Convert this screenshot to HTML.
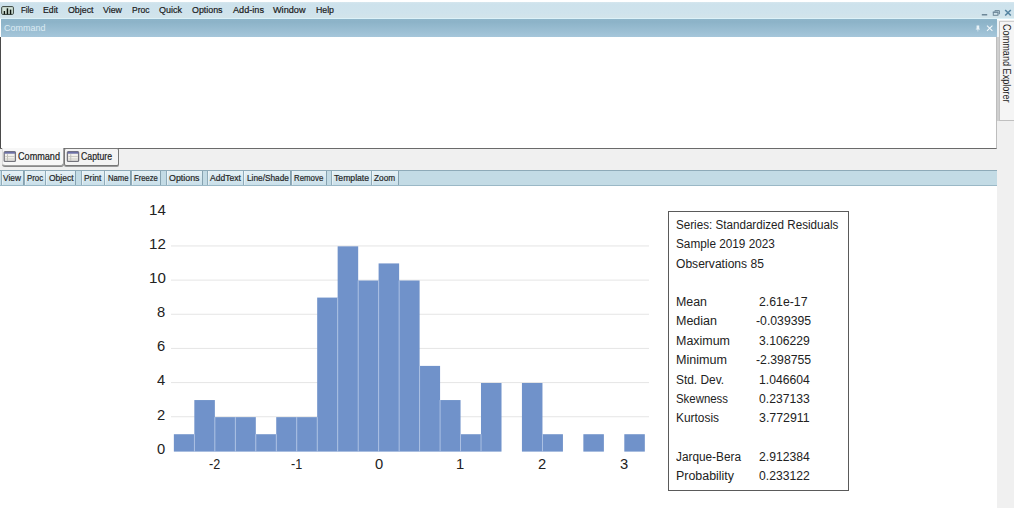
<!DOCTYPE html>
<html><head><meta charset="utf-8"><title>EViews</title>
<style>
html,body{margin:0;padding:0;background:#fff;}
body{width:1024px;height:508px;position:relative;overflow:hidden;font-family:"Liberation Sans",sans-serif;}
.t{position:absolute;white-space:nowrap;line-height:1;transform-origin:0 0;display:block;}
.b{position:absolute;box-sizing:border-box;}
svg{position:absolute;left:0;top:0;}
</style></head><body>
<div class="b" style="left:0px;top:2.4px;width:1014px;height:17px;background:linear-gradient(#d6e7ee,#cde2ec 12%,#cfe3ec 65%,#d3e4ea 92%,#dcf2f9 94%);"></div>
<div class="b" style="left:997px;top:20px;width:17px;height:488px;background:#f0f0f0;"></div>
<div class="b" style="left:1px;top:19.2px;width:995.5px;height:18.5px;background:linear-gradient(#8fb5c9,#8cb3c8 15%,#a5c6da 94%,#9caab6 96%);"></div>
<div class="b" style="left:0px;top:37.4px;width:997px;height:111.4px;background:#fff;border-bottom:1px solid #6a6a6a;border-right:1px solid #bdbdbd;"></div>
<div class="b" style="left:0px;top:37.4px;width:1.4px;height:111px;background:#4a4a4a;"></div>
<div class="b" style="left:0px;top:149px;width:997px;height:21px;background:#f0f0f0;"></div>
<div class="b" style="left:0px;top:170px;width:997px;height:16px;background:#c3dbe5;border-top:1px solid #8eaab8;border-bottom:1px solid #9ab8c6;"></div>
<span class="t" style="left:20.60px;top:4px;line-height:11px;font-size:9.6px;color:#1a1a1a;transform:scaleX(0.8210);-webkit-text-stroke:0.2px currentColor;">File</span>
<span class="t" style="left:43.00px;top:4px;line-height:11px;font-size:9.6px;color:#1a1a1a;transform:scaleX(0.9068);-webkit-text-stroke:0.2px currentColor;">Edit</span>
<span class="t" style="left:68.00px;top:4px;line-height:11px;font-size:9.6px;color:#1a1a1a;transform:scaleX(0.9191);-webkit-text-stroke:0.2px currentColor;">Object</span>
<span class="t" style="left:103.00px;top:4px;line-height:11px;font-size:9.6px;color:#1a1a1a;transform:scaleX(0.9208);-webkit-text-stroke:0.2px currentColor;">View</span>
<span class="t" style="left:131.50px;top:4px;line-height:11px;font-size:9.6px;color:#1a1a1a;transform:scaleX(0.8866);-webkit-text-stroke:0.2px currentColor;">Proc</span>
<span class="t" style="left:159.00px;top:4px;line-height:11px;font-size:9.6px;color:#1a1a1a;transform:scaleX(0.9373);-webkit-text-stroke:0.2px currentColor;">Quick</span>
<span class="t" style="left:192.00px;top:4px;line-height:11px;font-size:9.6px;color:#1a1a1a;transform:scaleX(0.9219);-webkit-text-stroke:0.2px currentColor;">Options</span>
<span class="t" style="left:232.50px;top:4px;line-height:11px;font-size:9.6px;color:#1a1a1a;transform:scaleX(0.9524);-webkit-text-stroke:0.2px currentColor;">Add-ins</span>
<span class="t" style="left:273.00px;top:4px;line-height:11px;font-size:9.6px;color:#1a1a1a;transform:scaleX(0.9519);-webkit-text-stroke:0.2px currentColor;">Window</span>
<span class="t" style="left:316.00px;top:4px;line-height:11px;font-size:9.6px;color:#1a1a1a;transform:scaleX(0.9117);-webkit-text-stroke:0.2px currentColor;">Help</span>
<svg width="16" height="20" viewBox="0 0 16 20"><rect x="1.7" y="6.6" width="11.7" height="7.8" rx="1.1" fill="#d2e3d9" stroke="#37423b" stroke-width="1"/>
<rect x="3.7" y="11.0" width="1.4" height="3.4" fill="#0c140e"/><rect x="6.7" y="8.3" width="1.5" height="6.1" fill="#0c140e"/><rect x="9.8" y="9.6" width="1.5" height="4.8" fill="#0c140e"/></svg>
<svg width="1024" height="40" viewBox="0 0 1024 40">
<rect x="981.8" y="14" width="5.4" height="1.5" fill="#6d8798"/>
<rect x="993.3" y="12.3" width="4.6" height="3" fill="none" stroke="#6d8798" stroke-width="1"/><rect x="992.8" y="11.6" width="5.6" height="1" fill="#6d8798"/>
<path d="M994.9 11.6 V10.6 H999.4 V14 H998.4" fill="none" stroke="#6d8798" stroke-width="1"/>
<path d="M1005.2 10 L1010.8 15.5 M1010.8 10 L1005.2 15.5" stroke="#5584a1" stroke-width="1.6" fill="none"/>
<path d="M987 25.6 L992.4 30.8 M992.4 25.6 L987 30.8" stroke="#f2f8fb" stroke-width="1.1" fill="none"/>
<path d="M976.6 25.4 h2.6 v3.4 h0.8 v0.8 h-1.8 v2 h-0.6 v-2 h-1.8 v-0.8 h0.8 z" fill="#e8f2f7"/>
</svg>
<span class="t" style="left:3.60px;top:22px;line-height:11px;font-size:9.6px;color:#dcebf3;transform:scaleX(0.9349);">Command</span>
<div class="b" style="left:996.5px;top:37px;width:3px;height:84px;background:#cfcfcf;"></div>
<div class="b" style="left:996.6px;top:19.5px;width:3px;height:17.5px;background:#eef3f6;"></div>
<div class="b" style="left:999.3px;top:21px;width:14.7px;height:100px;background:#f5f5f5;border-top:1px solid #cfcfcf;border-left:1px solid #c2c2c2;border-bottom:1px solid #c0c0c0;"></div>
<span class="t" style="left:1010.7px;top:24.2px;font-size:10px;color:#222;transform:rotate(90deg) scaleX(0.9113);">Command Explorer</span>
<div class="b" style="left:2px;top:148px;width:62px;height:18px;background:#f7f7f7;border:1px solid #a0a0a0;border-left-color:#dcdcdc;border-top:none;border-radius:0 0 3px 3px;box-shadow:0 1px 0 #888;"></div>
<div class="b" style="left:64px;top:148px;width:55px;height:18px;background:#f3f3f3;border:1px solid #777;border-radius:2px;box-shadow:0 1px 0 #999;"></div>
<svg width="1024" height="508" viewBox="0 0 1024 508" style="pointer-events:none"><rect x="4.2" y="151.6" width="11.2" height="9.8" rx="1" fill="#f2f1ec" stroke="#74747c" stroke-width="1.3"/><rect x="4.5" y="151.79999999999998" width="10.6" height="1.9" fill="#6c70a6"/><rect x="7.2" y="154.2" width="0.8" height="6.6" fill="#b4b4b0"/><rect x="5.2" y="156.2" width="9.4" height="0.8" fill="#c4c4bc"/><rect x="5.2" y="158.6" width="9.4" height="0.8" fill="#c4c4bc"/></svg>
<svg width="1024" height="508" viewBox="0 0 1024 508" style="pointer-events:none"><rect x="67.4" y="151.6" width="11.2" height="9.8" rx="1" fill="#f2f1ec" stroke="#74747c" stroke-width="1.3"/><rect x="67.7" y="151.79999999999998" width="10.6" height="1.9" fill="#6c70a6"/><rect x="70.4" y="154.2" width="0.8" height="6.6" fill="#b4b4b0"/><rect x="68.4" y="156.2" width="9.4" height="0.8" fill="#c4c4bc"/><rect x="68.4" y="158.6" width="9.4" height="0.8" fill="#c4c4bc"/></svg>
<span class="t" style="left:18.00px;top:151px;line-height:11px;font-size:10.0px;color:#222;transform:scaleX(0.9105);-webkit-text-stroke:0.2px currentColor;">Command</span>
<span class="t" style="left:81.30px;top:151px;line-height:11px;font-size:10.0px;color:#222;transform:scaleX(0.8714);-webkit-text-stroke:0.2px currentColor;">Capture</span>
<div class="b" style="left:0.6px;top:171px;width:23.799999999999997px;height:14.4px;background:linear-gradient(#e6f1f6,#d9eaf1 45%,#c9dfe9);border-left:1px solid #90acba;border-right:1px solid #86a2b0;"></div>
<div class="b" style="left:1.6px;top:171px;width:1px;height:14.4px;background:rgba(255,255,255,0.45);"></div>
<span class="t" style="left:3.20px;top:173px;line-height:10px;font-size:9.1px;color:#262626;transform:scaleX(0.9151);-webkit-text-stroke:0.2px currentColor;">View</span>
<div class="b" style="left:23.6px;top:171px;width:22.199999999999996px;height:14.4px;background:linear-gradient(#e6f1f6,#d9eaf1 45%,#c9dfe9);border-left:1px solid #90acba;border-right:1px solid #86a2b0;"></div>
<div class="b" style="left:24.6px;top:171px;width:1px;height:14.4px;background:rgba(255,255,255,0.45);"></div>
<span class="t" style="left:27.00px;top:173px;line-height:10px;font-size:9.1px;color:#262626;transform:scaleX(0.8658);-webkit-text-stroke:0.2px currentColor;">Proc</span>
<div class="b" style="left:45px;top:171px;width:31px;height:14.4px;background:linear-gradient(#e6f1f6,#d9eaf1 45%,#c9dfe9);border-left:1px solid #90acba;border-right:1px solid #86a2b0;"></div>
<div class="b" style="left:46px;top:171px;width:1px;height:14.4px;background:rgba(255,255,255,0.45);"></div>
<span class="t" style="left:48.70px;top:173px;line-height:10px;font-size:9.1px;color:#262626;transform:scaleX(0.9354);-webkit-text-stroke:0.2px currentColor;">Object</span>
<div class="b" style="left:81px;top:171px;width:23.900000000000006px;height:14.4px;background:linear-gradient(#e6f1f6,#d9eaf1 45%,#c9dfe9);border-left:1px solid #90acba;border-right:1px solid #86a2b0;"></div>
<div class="b" style="left:82px;top:171px;width:1px;height:14.4px;background:rgba(255,255,255,0.45);"></div>
<span class="t" style="left:84.00px;top:173px;line-height:10px;font-size:9.1px;color:#262626;transform:scaleX(0.9246);-webkit-text-stroke:0.2px currentColor;">Print</span>
<div class="b" style="left:104.1px;top:171px;width:27.30000000000001px;height:14.4px;background:linear-gradient(#e6f1f6,#d9eaf1 45%,#c9dfe9);border-left:1px solid #90acba;border-right:1px solid #86a2b0;"></div>
<div class="b" style="left:105.1px;top:171px;width:1px;height:14.4px;background:rgba(255,255,255,0.45);"></div>
<span class="t" style="left:107.50px;top:173px;line-height:10px;font-size:9.1px;color:#262626;transform:scaleX(0.8486);-webkit-text-stroke:0.2px currentColor;">Name</span>
<div class="b" style="left:130.6px;top:171px;width:30.0px;height:14.4px;background:linear-gradient(#e6f1f6,#d9eaf1 45%,#c9dfe9);border-left:1px solid #90acba;border-right:1px solid #86a2b0;"></div>
<div class="b" style="left:131.6px;top:171px;width:1px;height:14.4px;background:rgba(255,255,255,0.45);"></div>
<span class="t" style="left:134.00px;top:173px;line-height:10px;font-size:9.1px;color:#262626;transform:scaleX(0.8403);-webkit-text-stroke:0.2px currentColor;">Freeze</span>
<div class="b" style="left:165.6px;top:171px;width:37.0px;height:14.4px;background:linear-gradient(#e6f1f6,#d9eaf1 45%,#c9dfe9);border-left:1px solid #90acba;border-right:1px solid #86a2b0;"></div>
<div class="b" style="left:166.6px;top:171px;width:1px;height:14.4px;background:rgba(255,255,255,0.45);"></div>
<span class="t" style="left:169.00px;top:173px;line-height:10px;font-size:9.1px;color:#262626;transform:scaleX(0.9725);-webkit-text-stroke:0.2px currentColor;">Options</span>
<div class="b" style="left:207.3px;top:171px;width:36.69999999999999px;height:14.4px;background:linear-gradient(#e6f1f6,#d9eaf1 45%,#c9dfe9);border-left:1px solid #90acba;border-right:1px solid #86a2b0;"></div>
<div class="b" style="left:208.3px;top:171px;width:1px;height:14.4px;background:rgba(255,255,255,0.45);"></div>
<span class="t" style="left:210.10px;top:173px;line-height:10px;font-size:9.1px;color:#262626;transform:scaleX(0.9398);-webkit-text-stroke:0.2px currentColor;">AddText</span>
<div class="b" style="left:243.2px;top:171px;width:48.10000000000002px;height:14.4px;background:linear-gradient(#e6f1f6,#d9eaf1 45%,#c9dfe9);border-left:1px solid #90acba;border-right:1px solid #86a2b0;"></div>
<div class="b" style="left:244.2px;top:171px;width:1px;height:14.4px;background:rgba(255,255,255,0.45);"></div>
<span class="t" style="left:246.60px;top:173px;line-height:10px;font-size:9.1px;color:#262626;transform:scaleX(0.9099);-webkit-text-stroke:0.2px currentColor;">Line/Shade</span>
<div class="b" style="left:290.5px;top:171px;width:36.5px;height:14.4px;background:linear-gradient(#e6f1f6,#d9eaf1 45%,#c9dfe9);border-left:1px solid #90acba;border-right:1px solid #86a2b0;"></div>
<div class="b" style="left:291.5px;top:171px;width:1px;height:14.4px;background:rgba(255,255,255,0.45);"></div>
<span class="t" style="left:294.30px;top:173px;line-height:10px;font-size:9.1px;color:#262626;transform:scaleX(0.8647);-webkit-text-stroke:0.2px currentColor;">Remove</span>
<div class="b" style="left:331.2px;top:171px;width:40.69999999999999px;height:14.4px;background:linear-gradient(#e6f1f6,#d9eaf1 45%,#c9dfe9);border-left:1px solid #90acba;border-right:1px solid #86a2b0;"></div>
<div class="b" style="left:332.2px;top:171px;width:1px;height:14.4px;background:rgba(255,255,255,0.45);"></div>
<span class="t" style="left:333.90px;top:173px;line-height:10px;font-size:9.1px;color:#262626;transform:scaleX(0.9506);-webkit-text-stroke:0.2px currentColor;">Template</span>
<div class="b" style="left:371.1px;top:171px;width:27.5px;height:14.4px;background:linear-gradient(#e6f1f6,#d9eaf1 45%,#c9dfe9);border-left:1px solid #90acba;border-right:1px solid #86a2b0;"></div>
<div class="b" style="left:372.1px;top:171px;width:1px;height:14.4px;background:rgba(255,255,255,0.45);"></div>
<span class="t" style="left:374.30px;top:173px;line-height:10px;font-size:9.1px;color:#262626;transform:scaleX(0.9071);-webkit-text-stroke:0.2px currentColor;">Zoom</span>
<svg width="1024" height="508" viewBox="0 0 1024 508"><rect x="171" y="416.24" width="478" height="1" fill="#e5e5e5"/><rect x="171" y="382.08" width="478" height="1" fill="#e5e5e5"/><rect x="171" y="347.92" width="478" height="1" fill="#e5e5e5"/><rect x="171" y="313.76" width="478" height="1" fill="#e5e5e5"/><rect x="171" y="279.60" width="478" height="1" fill="#e5e5e5"/><rect x="171" y="245.44" width="478" height="1" fill="#e5e5e5"/><rect x="173.85" y="434.22" width="20.53" height="17.38" fill="#7092ca"/><rect x="194.33" y="400.06" width="20.53" height="51.54" fill="#7092ca"/><rect x="214.80" y="417.14" width="20.53" height="34.46" fill="#7092ca"/><rect x="235.28" y="417.14" width="20.53" height="34.46" fill="#7092ca"/><rect x="255.75" y="434.22" width="20.53" height="17.38" fill="#7092ca"/><rect x="276.23" y="417.14" width="20.53" height="34.46" fill="#7092ca"/><rect x="296.70" y="417.14" width="20.53" height="34.46" fill="#7092ca"/><rect x="317.18" y="297.58" width="20.53" height="154.02" fill="#7092ca"/><rect x="337.65" y="246.34" width="20.53" height="205.26" fill="#7092ca"/><rect x="358.12" y="280.50" width="20.53" height="171.10" fill="#7092ca"/><rect x="378.60" y="263.42" width="20.53" height="188.18" fill="#7092ca"/><rect x="399.08" y="280.50" width="20.53" height="171.10" fill="#7092ca"/><rect x="419.55" y="365.90" width="20.53" height="85.70" fill="#7092ca"/><rect x="440.03" y="400.06" width="20.53" height="51.54" fill="#7092ca"/><rect x="460.50" y="434.22" width="20.53" height="17.38" fill="#7092ca"/><rect x="480.98" y="382.98" width="20.53" height="68.62" fill="#7092ca"/><rect x="521.93" y="382.98" width="20.53" height="68.62" fill="#7092ca"/><rect x="542.40" y="434.22" width="20.53" height="17.38" fill="#7092ca"/><rect x="583.35" y="434.22" width="20.53" height="17.38" fill="#7092ca"/><rect x="624.30" y="434.22" width="20.53" height="17.38" fill="#7092ca"/><rect x="193.93" y="434.22" width="0.9" height="17.38" fill="#afc3e5"/><rect x="214.40" y="417.14" width="0.9" height="34.46" fill="#afc3e5"/><rect x="234.88" y="417.14" width="0.9" height="34.46" fill="#afc3e5"/><rect x="255.35" y="434.22" width="0.9" height="17.38" fill="#afc3e5"/><rect x="275.83" y="434.22" width="0.9" height="17.38" fill="#afc3e5"/><rect x="296.30" y="417.14" width="0.9" height="34.46" fill="#afc3e5"/><rect x="316.78" y="417.14" width="0.9" height="34.46" fill="#afc3e5"/><rect x="337.25" y="297.58" width="0.9" height="154.02" fill="#afc3e5"/><rect x="357.73" y="280.50" width="0.9" height="171.10" fill="#afc3e5"/><rect x="378.20" y="280.50" width="0.9" height="171.10" fill="#afc3e5"/><rect x="398.68" y="280.50" width="0.9" height="171.10" fill="#afc3e5"/><rect x="419.15" y="365.90" width="0.9" height="85.70" fill="#afc3e5"/><rect x="439.63" y="400.06" width="0.9" height="51.54" fill="#afc3e5"/><rect x="460.10" y="434.22" width="0.9" height="17.38" fill="#afc3e5"/><rect x="480.58" y="434.22" width="0.9" height="17.38" fill="#afc3e5"/><rect x="542.00" y="434.22" width="0.9" height="17.38" fill="#afc3e5"/></svg>
<span class="t" style="left:156.90px;top:441px;line-height:16px;font-size:14.0px;color:#222;transform:scaleX(1.0531);">0</span>
<span class="t" style="left:156.90px;top:407px;line-height:16px;font-size:14.0px;color:#222;transform:scaleX(1.0531);">2</span>
<span class="t" style="left:156.90px;top:372px;line-height:16px;font-size:14.0px;color:#222;transform:scaleX(1.0531);">4</span>
<span class="t" style="left:156.90px;top:338px;line-height:16px;font-size:14.0px;color:#222;transform:scaleX(1.0531);">6</span>
<span class="t" style="left:156.90px;top:304px;line-height:16px;font-size:14.0px;color:#222;transform:scaleX(1.0531);">8</span>
<span class="t" style="left:148.60px;top:270px;line-height:16px;font-size:14.0px;color:#222;transform:scaleX(1.0788);">10</span>
<span class="t" style="left:148.60px;top:236px;line-height:16px;font-size:14.0px;color:#222;transform:scaleX(1.0788);">12</span>
<span class="t" style="left:148.60px;top:202px;line-height:16px;font-size:14.0px;color:#222;transform:scaleX(1.0788);">14</span>
<span class="t" style="left:209.00px;top:456px;line-height:16px;font-size:14.0px;color:#222;transform:scaleX(0.8997);">-2</span>
<span class="t" style="left:290.90px;top:456px;line-height:16px;font-size:14.0px;color:#222;transform:scaleX(0.8997);">-1</span>
<span class="t" style="left:374.50px;top:456px;line-height:16px;font-size:14.0px;color:#222;transform:scaleX(1.0531);">0</span>
<span class="t" style="left:456.40px;top:456px;line-height:16px;font-size:14.0px;color:#222;transform:scaleX(1.0531);">1</span>
<span class="t" style="left:538.30px;top:456px;line-height:16px;font-size:14.0px;color:#222;transform:scaleX(1.0531);">2</span>
<span class="t" style="left:620.20px;top:456px;line-height:16px;font-size:14.0px;color:#222;transform:scaleX(1.0531);">3</span>
<div class="b" style="left:668px;top:211px;width:181px;height:280px;background:#fff;border:1px solid #5a5a5a;"></div>
<span class="t" style="left:675.60px;top:218px;line-height:14px;font-size:12px;color:#222;transform:scaleX(0.9700);">Series: Standardized Residuals</span>
<span class="t" style="left:675.60px;top:237px;line-height:14px;font-size:12px;color:#222;transform:scaleX(0.9817);">Sample 2019 2023</span>
<span class="t" style="left:675.60px;top:257px;line-height:14px;font-size:12px;color:#222;transform:scaleX(1.0059);">Observations 85</span>
<span class="t" style="left:675.60px;top:295px;line-height:14px;font-size:12px;color:#222;transform:scaleX(1.0327);">Mean</span>
<span class="t" style="left:758.50px;top:295px;line-height:14px;font-size:12px;color:#222;transform:scaleX(1.0238);">2.61e-17</span>
<span class="t" style="left:675.60px;top:314px;line-height:14px;font-size:12px;color:#222;transform:scaleX(1.0417);">Median</span>
<span class="t" style="left:755.50px;top:314px;line-height:14px;font-size:12px;color:#222;transform:scaleX(1.0195);">-0.039395</span>
<span class="t" style="left:675.60px;top:334px;line-height:14px;font-size:12px;color:#222;transform:scaleX(1.0384);">Maximum</span>
<span class="t" style="left:758.50px;top:334px;line-height:14px;font-size:12px;color:#222;transform:scaleX(1.0130);">3.106229</span>
<span class="t" style="left:675.60px;top:353px;line-height:14px;font-size:12px;color:#222;transform:scaleX(1.0479);">Minimum</span>
<span class="t" style="left:755.50px;top:353px;line-height:14px;font-size:12px;color:#222;transform:scaleX(1.0195);">-2.398755</span>
<span class="t" style="left:675.60px;top:373px;line-height:14px;font-size:12px;color:#222;transform:scaleX(0.9904);">Std. Dev.</span>
<span class="t" style="left:758.50px;top:373px;line-height:14px;font-size:12px;color:#222;transform:scaleX(1.0130);">1.046604</span>
<span class="t" style="left:675.60px;top:392px;line-height:14px;font-size:12px;color:#222;transform:scaleX(0.9508);">Skewness</span>
<span class="t" style="left:758.50px;top:392px;line-height:14px;font-size:12px;color:#222;transform:scaleX(1.0130);">0.237133</span>
<span class="t" style="left:675.60px;top:411px;line-height:14px;font-size:12px;color:#222;transform:scaleX(0.9920);">Kurtosis</span>
<span class="t" style="left:758.50px;top:411px;line-height:14px;font-size:12px;color:#222;transform:scaleX(1.0313);">3.772911</span>
<span class="t" style="left:675.60px;top:450px;line-height:14px;font-size:12px;color:#222;transform:scaleX(0.9843);">Jarque-Bera</span>
<span class="t" style="left:758.50px;top:450px;line-height:14px;font-size:12px;color:#222;transform:scaleX(1.0130);">2.912384</span>
<span class="t" style="left:675.60px;top:469px;line-height:14px;font-size:12px;color:#222;transform:scaleX(1.0352);">Probability</span>
<span class="t" style="left:758.50px;top:469px;line-height:14px;font-size:12px;color:#222;transform:scaleX(1.0130);">0.233122</span>
</body></html>
